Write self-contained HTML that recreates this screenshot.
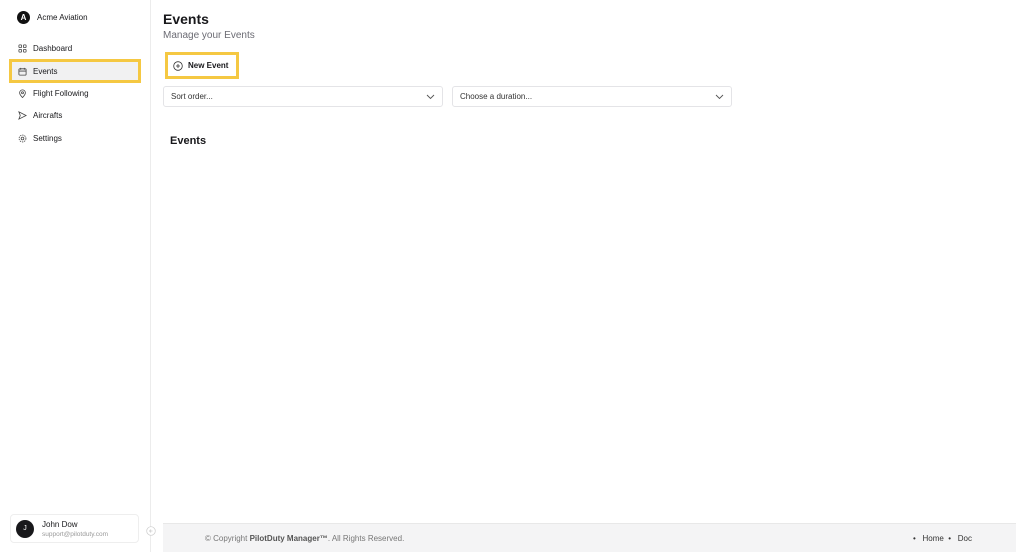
<!DOCTYPE html>
<html><head><style>
*{box-sizing:border-box;margin:0;padding:0}
body{width:1024px;height:552px;overflow:hidden;background:#fff;font-family:"Liberation Sans",sans-serif;color:#18181b;position:relative}
.side{position:absolute;left:0;top:0;width:151px;height:552px;border-right:1px solid #ececec}
.logo{position:absolute;left:17px;top:11px;display:flex;align-items:center;font-size:8px}
.logo .a{width:13px;height:13px;border-radius:50%;background:#111;color:#fff;font-size:8px;font-weight:bold;display:flex;align-items:center;justify-content:center;margin-right:7px}
.nav{position:absolute;left:12px;font-size:8px;display:flex;align-items:center;height:18px;padding-left:6px;width:126px}
.nav svg{width:9px;height:9px;margin-right:6px}
.sel{background:#f1f1f2;outline:3px solid #f5c842}
.user{position:absolute;left:10px;top:514px;width:129px;height:29px;border:1px solid #eee;border-radius:4px;display:flex;align-items:center;padding-left:5px}
.user .j{width:18px;height:18px;border-radius:50%;background:#18181b;color:#fff;font-size:7px;display:flex;align-items:center;justify-content:center;margin-right:8px}
h1{position:absolute;left:163px;top:11px;font-size:14px;font-weight:bold}
.sub{position:absolute;left:163px;top:30px;font-size:10px;color:#6b6b73}
.btn{position:absolute;left:168px;top:55px;width:68px;height:21px;outline:3px solid #f5c842;display:flex;align-items:center;font-size:8px;font-weight:bold;padding-left:5px}
.sel2{position:absolute;top:86px;height:21px;border:1px solid #e4e4e7;border-radius:3px;font-size:8px;color:#333;display:flex;align-items:center;padding-left:7px}
.sel2 svg{position:absolute;right:7px;top:7px}
h2{position:absolute;left:170px;top:135px;font-size:11px;font-weight:bold}
.foot{position:absolute;left:163px;top:523px;width:853px;height:29px;background:#f4f4f5;border-top:1px solid #e8e8e8;font-size:8px;color:#777}
</style></head><body>
<div class="side">
<div class="logo"><div class="a">A</div>Acme Aviation</div>
<div class="nav" style="top:39px"><svg viewBox="0 0 10 10" fill="none" stroke="#444" stroke-width=".9"><rect x="1" y="1" width="3" height="3" rx=".8"/><rect x="6" y="1" width="3" height="3" rx=".8"/><rect x="1" y="6" width="3" height="3" rx=".8"/><rect x="6" y="6" width="3" height="3" rx=".8"/></svg>Dashboard</div>
<div class="nav sel" style="top:62px"><svg viewBox="0 0 10 10" fill="none" stroke="#444" stroke-width=".9"><rect x="1" y="2" width="8" height="7" rx="1"/><path d="M1 4.5h8M3 1v2M7 1v2"/></svg>Events</div>
<div class="nav" style="top:84px"><svg viewBox="0 0 10 10" fill="none" stroke="#444" stroke-width=".9"><path d="M5 9.5C3 7.5 1.8 5.8 1.8 4.2a3.2 3.2 0 0 1 6.4 0C8.2 5.8 7 7.5 5 9.5z"/><circle cx="5" cy="4.2" r="1.1"/></svg>Flight Following</div>
<div class="nav" style="top:106px"><svg viewBox="0 0 10 10" fill="none" stroke="#444" stroke-width=".9"><path d="M1 1l8 4-8 4 1.5-4z"/></svg>Aircrafts</div>
<div class="nav" style="top:129px"><svg viewBox="0 0 10 10" fill="none" stroke="#444" stroke-width=".9"><circle cx="5" cy="5" r="1.5"/><circle cx="5" cy="5" r="3.8" stroke-dasharray="1.5 1"/></svg>Settings</div>
<div class="user"><div class="j">J</div><div><div style="font-size:8px">John Dow</div><div style="font-size:6.5px;color:#999;margin-top:2px">support@pilotduty.com</div></div></div>
<svg style="position:absolute;left:146px;top:526px" width="10" height="10" viewBox="0 0 10 10" fill="#fff" stroke="#ccc" stroke-width=".7"><circle cx="5" cy="5" r="4.3"/><path d="M6.5 5h-3M5 3.5 3.5 5 5 6.5"/></svg>
</div>
<h1>Events</h1>
<div class="sub">Manage your Events</div>
<div class="btn"><svg width="10" height="10" viewBox="0 0 10 10" fill="none" stroke="#333" stroke-width=".8" style="margin-right:5px"><circle cx="5" cy="5" r="4.3"/><path d="M5 3v4M3 5h4"/></svg>New Event</div>
<div class="sel2" style="left:163px;width:280px">Sort order...<svg width="9" height="6" viewBox="0 0 9 6" fill="none" stroke="#555" stroke-width=".9"><path d="M1 1l3.5 3.5L8 1"/></svg></div>
<div class="sel2" style="left:452px;width:280px">Choose a duration...<svg width="9" height="6" viewBox="0 0 9 6" fill="none" stroke="#555" stroke-width=".9"><path d="M1 1l3.5 3.5L8 1"/></svg></div>
<h2>Events</h2>
<div class="foot"><span style="position:absolute;left:42px;top:10px">© Copyright <b style="color:#555">PilotDuty Manager™</b>. All Rights Reserved.</span><span style="position:absolute;left:750px;top:10px;color:#333">•&nbsp;&nbsp; Home &nbsp;•&nbsp;&nbsp; Doc</span></div>
</body></html>
